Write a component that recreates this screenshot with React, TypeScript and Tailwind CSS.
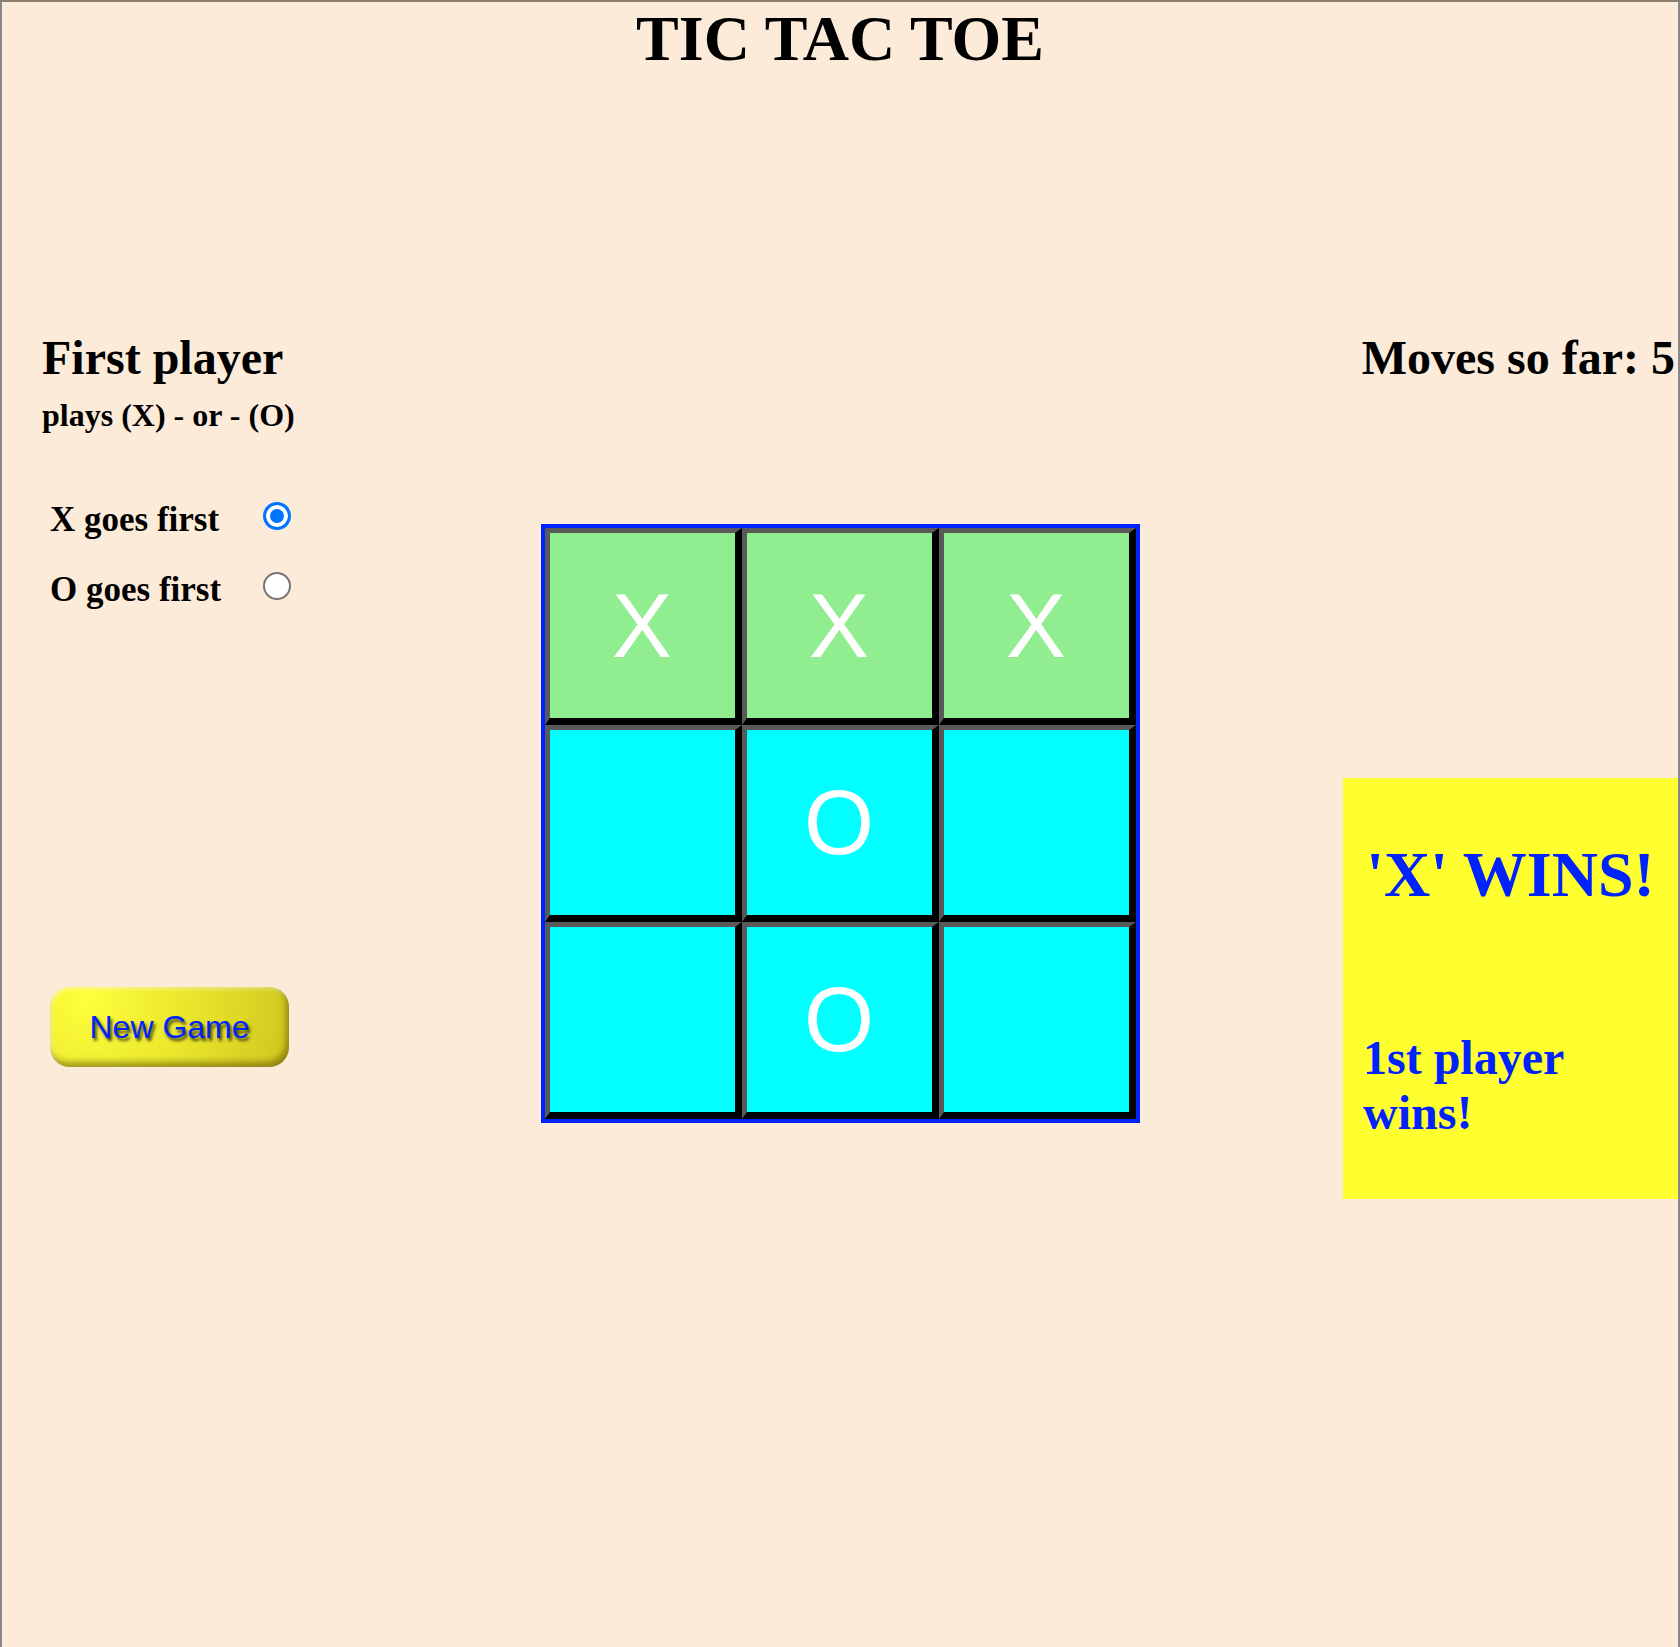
import { useState } from 'react'

const cells = ['X', 'X', 'X', '', 'O', '', '', 'O', '']
const winLine = [0, 1, 2]

export default function App() {
  const [first, setFirst] = useState<'X' | 'O'>('X')

  return (
    <div className="min-h-screen bg-[#fdebd9] border-t-2 border-t-[#8b7d6b] border-x-2 border-x-[#888] font-['Liberation_Serif',serif] text-black">
      <h1 className="text-center text-[64px] font-bold leading-[73px]">TIC TAC TOE</h1>

      <div className="mt-[255px] grid grid-cols-[1fr_auto_1fr] items-start">
        {/* left: first player choice */}
        <div className="pl-[40px] font-bold">
          <h2 className="text-[48px] leading-[55px]">First player</h2>
          <p className="mt-[12px] text-[32px] leading-[37px]">plays (X) - or - (O)</p>

          <div className="mt-[66px] pl-[8px]">
            {(['X', 'O'] as const).map((p, i) => (
              <label key={p} className={`flex items-start ${i > 0 ? 'mt-[30px]' : ''}`}>
                <span className="w-[213px] text-[35px] leading-[40px]">{p} goes first</span>
                <input
                  type="radio"
                  name="first"
                  checked={first === p}
                  onChange={() => setFirst(p)}
                  className="mt-[2px] h-[28px] w-[28px] appearance-none rounded-full border-2 border-[#767676] bg-white checked:border-[3px] checked:border-[#0075ff] checked:bg-[#0075ff] checked:shadow-[inset_0_0_0_4px_#fff]"
                />
              </label>
            ))}
          </div>

          <button className="ml-[8px] mt-[377px] flex h-[80px] w-[239px] items-center justify-center rounded-[20px] bg-[radial-gradient(circle_at_15%_15%,#ffff3c,#e6e22a_55%,#cfc51e)] shadow-[inset_-3px_-5px_6px_rgba(60,50,0,0.45),inset_2px_2px_4px_rgba(255,255,255,0.45)] font-['Liberation_Sans',Arial,sans-serif] text-[32px] font-normal text-[#0022ff] [text-shadow:2px_3px_3px_rgba(0,0,0,0.7)]">
            New Game
          </button>
        </div>

        {/* board */}
        <div className="mt-[194px] grid grid-cols-3 border-4 border-[#0022ff]">
          {cells.map((v, i) => (
            <div
              key={i}
              className={`flex h-[197px] w-[197px] items-center justify-center border-t-[5px] border-l-[5px] border-r-[7px] border-b-[7px] border-t-[#595959] border-l-[#595959] border-r-black border-b-black font-['Liberation_Sans',Arial,sans-serif] text-[90px] leading-none text-white ${
                winLine.includes(i) ? 'bg-[#90ee90]' : 'bg-[#00ffff]'
              }`}
            >
              {v}
            </div>
          ))}
        </div>

        {/* right: moves + result */}
        <div className="flex flex-col items-end font-bold">
          <h2 className="pr-[3px] text-[48px] leading-[55px]">Moves so far: 5</h2>
          <div className="mt-[393px] h-[421px] w-[335px] bg-[#ffff2f] px-[20px] pt-[60px] text-[#0022ff]">
            <h2 className="text-center text-[64px] leading-[73px]">'X' WINS!</h2>
            <p className="mt-[119px] text-[48px] leading-[55px]">1st player wins!</p>
          </div>
        </div>
      </div>
    </div>
  )
}
